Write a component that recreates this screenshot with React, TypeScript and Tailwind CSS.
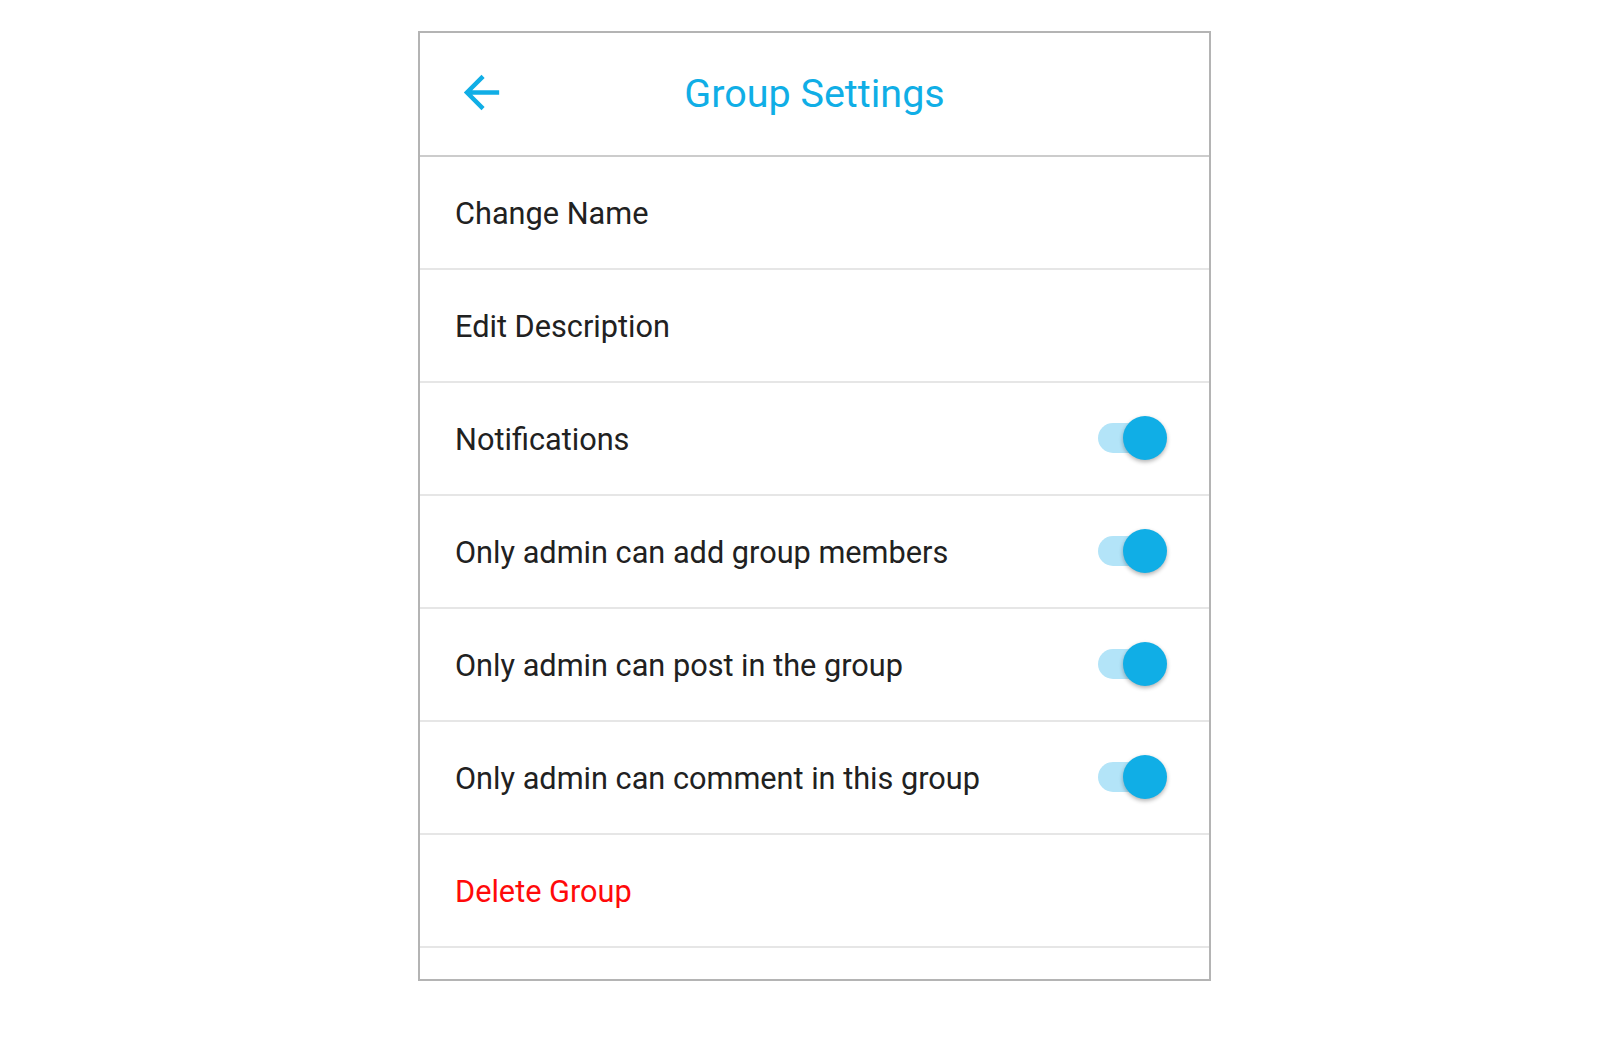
const rows: { label: string; toggle?: boolean; danger?: boolean }[] = [
  { label: 'Change Name' },
  { label: 'Edit Description' },
  { label: 'Notifications', toggle: true },
  { label: 'Only admin can add group members', toggle: true },
  { label: 'Only admin can post in the group', toggle: true },
  { label: 'Only admin can comment in this group', toggle: true },
  { label: 'Delete Group', danger: true },
];

function Toggle() {
  return (
    <div className="relative w-[69px] h-[44px] shrink-0 -mt-[1px]">
      <div className="absolute left-0 top-[7px] w-[65px] h-[30px] rounded-full bg-[#b3e4f8]" />
      <div className="absolute right-0 top-0 w-[44px] h-[44px] rounded-full bg-[#10aee6] shadow-[0_2px_4px_rgba(0,0,0,0.3)]" />
    </div>
  );
}

export default function App() {
  return (
    <div className="min-h-screen bg-white pt-[31px] font-['Roboto',sans-serif]">
      <div className="ml-[418px] w-[793px] h-[950px] border-2 border-[#b4b4b4] bg-white flex flex-col">
        <header className="relative h-[124px] shrink-0 flex items-center justify-center border-b-2 border-[#cccccc]">
          <button className="absolute left-[35px] top-[33px] w-[53px] h-[53px] text-[#10aee6]">
            <svg viewBox="0 0 24 24" className="w-full h-full" fill="currentColor">
              <path d="M20 11H7.83l5.59-5.59L12 4l-8 8 8 8 1.41-1.41L7.83 13H20v-2z" />
            </svg>
          </button>
          <h1 className="text-[39.5px] leading-none text-[#10aee6] -mt-[1px]">Group Settings</h1>
        </header>
        {rows.map((r) => (
          <div
            key={r.label}
            className="h-[113px] shrink-0 flex items-center justify-between pl-[35px] pr-[42px] border-b-2 border-[#e6e6e6]"
          >
            <span className={`text-[30.7px] pt-[4px] ${r.danger ? 'text-[#ff0a0a]' : 'text-[#212121]'}`}>{r.label}</span>
            {r.toggle && <Toggle />}
          </div>
        ))}
      </div>
    </div>
  );
}
